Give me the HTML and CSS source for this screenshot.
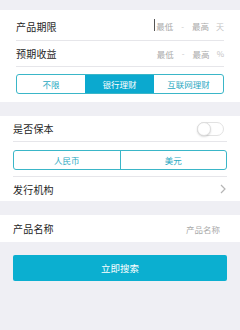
FILE: index.html
```html
<!DOCTYPE html>
<html>
<head>
<meta charset="utf-8">
<link rel="stylesheet" href="styles.css">
</head>
<body>
<div class="page">
  <div class="section s1">
    <div class="row r1 line">
      <span class="label">产品期限</span>
      <span class="range"><span class="cursor"></span><span class="ph">最低</span><span class="dash">-</span><span class="ph">最高</span><span class="unit">天</span></span>
    </div>
    <div class="row r2 line">
      <span class="label">预期收益</span>
      <span class="range"><span class="ph">最低</span><span class="dash">-</span><span class="ph">最高</span><span class="unit">%</span></span>
    </div>
    <div class="seg seg3">
      <div class="opt">不限</div>
      <div class="opt on">银行理财</div>
      <div class="opt">互联网理财</div>
    </div>
  </div>
  <div class="section s2">
    <div class="row r3 line">
      <span class="label">是否保本</span>
      <span class="toggle"><span class="knob"></span></span>
    </div>
    <div class="seg seg2">
      <div class="opt">人民币</div>
      <div class="opt">美元</div>
    </div>
    <div class="row r4 topline">
      <span class="label">发行机构</span>
      <svg class="chev" width="6" height="10" viewBox="0 0 6 10"><path d="M1 1 L5 5 L1 9" fill="none" stroke="#b5b5b5" stroke-width="1.2"/></svg>
    </div>
  </div>
  <div class="section s3">
    <div class="row r5">
      <span class="label">产品名称</span>
      <span class="ph name">产品名称</span>
    </div>
  </div>
  <div class="btn">立即搜索</div>
</div>
</body>
</html>
```
FILE: styles.css
```css
* { box-sizing: border-box; }
html, body { margin: 0; padding: 0; }
body {
  background: #efeff4;
  font-family: "Noto Sans CJK SC", "Noto Sans", sans-serif;
  width: 240px;
  height: 330px;
  overflow: hidden;
}
.page { padding-top: 10px; }
.section { background: #fff; }
.s1 { padding: 0 16px 8px; }
.s2 { margin-top: 14px; padding: 0 13px; }
.s3 { margin-top: 14px; padding: 0 13px; }
.row {
  display: flex;
  align-items: center;
  justify-content: space-between;
}
.line { border-bottom: 1px solid #e6e6ea; }
.topline { border-top: 1px solid #e6e6ea; }
.r1 { height: 31px; padding-top: 2px; }
.r2 { height: 26px; }
.r3 { height: 26px; }
.r4 { height: 25px; margin-top: 6px; }
.r5 { height: 27px; }
.label {
  font-size: 10px;
  color: #1e1e1e;
  letter-spacing: 0.2px;
}
.range {
  display: flex;
  align-items: center;
  position: relative;
  font-size: 8px;
  color: #b0b0b0;
}
.cursor {
  position: absolute;
  left: -2px;
  top: -1px;
  width: 1px;
  height: 12px;
  background: #555;
}
.dash { margin: 0 8px; color: #c8c8c8; }
.unit { margin-left: 7px; color: #c4c4c4; }
.ph { font-size: 8.5px; color: #aaa; }
.name { font-size: 8.5px; margin-right: 7px; }
.seg {
  display: flex;
  height: 20px;
  border: 1px solid #3ab6c8;
  border-radius: 3px;
  overflow: hidden;
  margin-top: 7px;
}
.seg2 { margin-top: 8px; }
.opt {
  flex: 1;
  display: flex;
  align-items: center;
  justify-content: center;
  font-size: 8.5px;
  color: #2aa9c2;
}
.seg2 .opt + .opt { border-left: 1px solid #3ab6c8; }
.seg3 .opt:first-child { flex: 0 0 68px; }
.opt.on { background: #0ba9cf; color: #fff; }
.toggle {
  width: 27px;
  height: 14px;
  border: 1px solid #e2e2e2;
  border-radius: 7px;
  position: relative;
  margin-right: 3px;
}
.knob {
  position: absolute;
  left: -1px;
  top: -1px;
  width: 14px;
  height: 14px;
  border-radius: 50%;
  background: #fff;
  border: 1px solid #ddd;
  box-shadow: 0 1px 2px rgba(0,0,0,0.15);
}
.chev { margin-right: 1px; }
.btn {
  margin: 13px 13px 0;
  height: 26px;
  border-radius: 2px;
  background: #0bafd0;
  color: #fff;
  font-size: 9.5px;
  display: flex;
  align-items: center;
  justify-content: center;
}
```
